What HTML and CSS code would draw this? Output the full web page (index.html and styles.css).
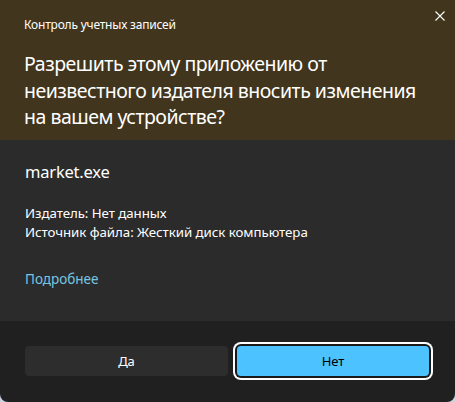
FILE: index.html
```html
<!DOCTYPE html>
<html lang="ru">
<head>
<meta charset="utf-8">
<link rel="stylesheet" href="styles.css">
</head>
<body>
<div class="dialog">
  <div class="header">
    <div class="topbar">
      <span class="caption">Контроль учетных записей</span>
      <svg class="close" width="10" height="10" viewBox="0 0 10 10"><path d="M0.5 0.5L9.5 9.5M9.5 0.5L0.5 9.5" stroke="#ffffff" stroke-width="1.1" fill="none"/></svg>
    </div>
    <h1 class="question">Разрешить этому приложению от<br>неизвестного издателя вносить изменения<br>на вашем устройстве?</h1>
  </div>
  <div class="content">
    <div class="app">market.exe</div>
    <div class="info">
      <div>Издатель: Нет данных</div>
      <div>Источник файла: Жесткий диск компьютера</div>
    </div>
    <div class="more">Подробнее</div>
  </div>
  <div class="footer">
    <button class="btn btn-yes">Да</button>
    <button class="btn btn-no">Нет</button>
  </div>
</div>
</body>
</html>
```

FILE: styles.css
```css
html, body {
  margin: 0;
  padding: 0;
  background: #c9d3de;
}
body {
  width: 455px;
  height: 402px;
  overflow: hidden;
  font-family: "Noto Sans", "Open Sans", sans-serif;
  color: #ffffff;
}
.dialog {
  width: 455px;
  height: 402px;
  display: flex;
  flex-direction: column;
  border-radius: 0 0 8px 8px;
  overflow: hidden;
}
.header {
  background: #42351d;
  height: 140px;
  box-sizing: border-box;
  padding: 0 10px 0 24px;
}
.topbar {
  display: flex;
  justify-content: space-between;
  align-items: flex-start;
  height: 51px;
}
.caption {
  font-size: 12px;
  margin-top: 16px;
  letter-spacing: -0.2px;
}
.close {
  margin-top: 11px;
  margin-right: 0;
}
.question {
  margin: 0;
  font-weight: 400;
  font-size: 19.5px;
  line-height: 26.5px;
  letter-spacing: -0.5px;
  white-space: nowrap;
}
.content {
  background: #2b2b2b;
  height: 181px;
  box-sizing: border-box;
  padding: 22px 24px 0 25px;
}
.app {
  font-size: 16.5px;
  line-height: 20px;
  letter-spacing: -0.2px;
}
.info {
  margin-top: 22px;
  font-size: 13.3px;
  line-height: 19px;
  letter-spacing: -0.05px;
}
.more {
  margin-top: 28px;
  font-size: 13.5px;
  line-height: 19px;
  color: #76c6e2;
}
.footer {
  flex: 1;
  background: #202020;
  display: grid;
  grid-template-columns: 203px 192px;
  column-gap: 9px;
  padding: 25px 0 0 25px;
  align-content: start;
}
.btn {
  height: 30px;
  border: none;
  border-radius: 4px;
  font-family: "Noto Sans", "Open Sans", sans-serif;
  font-size: 13px;
  line-height: 28px;
  padding: 0;
}
.btn-yes {
  background: #2d2d2d;
  color: #ffffff;
}
.btn-no {
  background: #4cc2ff;
  color: #000000;
  box-shadow: 0 0 0 2px #1a1a1a, 0 0 0 4px #ffffff;
}
```
